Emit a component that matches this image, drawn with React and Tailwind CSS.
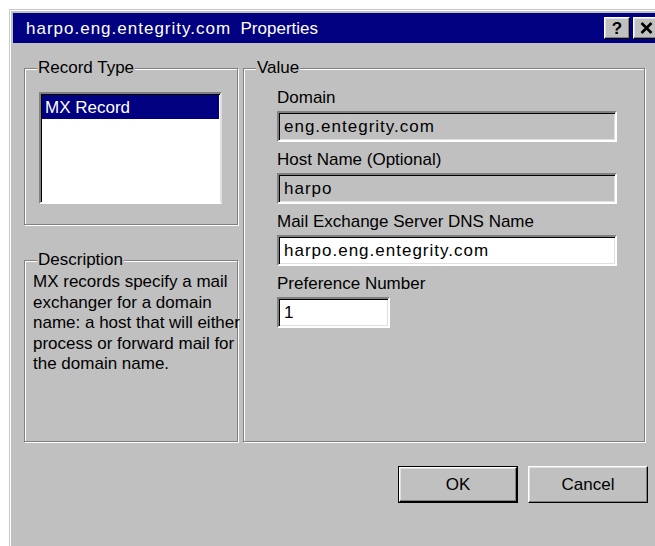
import React from 'react';

const font = { fontFamily: '"Liberation Sans", Arial, sans-serif' };

// etched group frame with its caption sitting on the top edge
const GroupBox = ({ title, className = '', children }) => (
  <div className={`relative border border-[#808080] shadow-[inset_1px_1px_0_#fff,1px_1px_0_#fff] ${className}`}>
    <span className="absolute -top-[11px] left-[12px] px-[1px] bg-[#c0c0c0] leading-[20px]">{title}</span>
    {children}
  </div>
);

const Field = ({ label, value, disabled, width = 'w-[340px]' }) => (
  <div className="flex flex-col">
    <span className="leading-[20px]">{label}</span>
    <div
      className={`mt-[3px] h-[31px] ${width} flex items-center px-[5px] border-2 border-t-[#808080] border-l-[#808080] border-b-white border-r-white shadow-[inset_1px_1px_0_#000,inset_-1px_-1px_0_#dfdfdf] ${disabled ? 'bg-[#c0c0c0]' : 'bg-white'}`}
    >
      <span className="tracking-[1px] leading-none">{value}</span>
    </div>
  </div>
);

const TitleButton = ({ children }) => (
  <div className="w-[26px] h-[22px] flex items-center justify-center bg-[#c0c0c0] border border-t-white border-l-white border-b-black border-r-black shadow-[inset_-1px_-1px_0_#808080,inset_1px_1px_0_#dfdfdf]">
    {children}
  </div>
);

export default function App() {
  return (
    <div className="w-[655px] h-[546px] overflow-hidden bg-white pt-[9px] pl-[9px] text-[17px] text-black" style={font}>
      <div className="w-[660px] h-[600px] bg-[#c0c0c0] border-l border-t border-[#c8c8c8] shadow-[inset_1px_1px_0_#fff] p-[3px]">
        {/* Title bar */}
        <div className="h-[30px] bg-[#000080] flex items-center pl-[13px] pr-[7px]">
          <span className="text-white whitespace-pre leading-none">
            <span className="tracking-[1px]">harpo.eng.entegrity.com</span>{'  Properties'}
          </span>
          <div className="ml-auto flex items-center gap-[3px]">
            <TitleButton>
              <span className="font-bold text-[17px] leading-none">?</span>
            </TitleButton>
            <TitleButton>
              <svg width="13" height="12" viewBox="0 0 13 12">
                <path d="M1.5 1 L11.5 11 M11.5 1 L1.5 11" stroke="#000" strokeWidth="2.6" />
              </svg>
            </TitleButton>
          </div>
        </div>

        {/* Groups */}
        <div className="mt-[25px] pl-[11px] flex gap-[5px]">
          <div className="w-[214px] flex flex-col">
            <GroupBox title="Record Type" className="h-[157px]">
              <div className="mt-[23px] ml-[14px] w-[183px] h-[112px] bg-white border-2 border-t-[#808080] border-l-[#808080] border-b-white border-r-[#dfdfdf] shadow-[inset_1px_1px_0_#000]">
                <div className="ml-[1px] mt-[1px] mr-[1px] h-[24px] bg-[#000080] text-white flex items-center pl-[3px] leading-none">
                  MX Record
                </div>
              </div>
            </GroupBox>
            <GroupBox title="Description" className="mt-[35px] h-[182px]">
              <div className="mt-[11px] pl-[8px] leading-[20.5px] whitespace-nowrap">
                <div>MX records specify a mail</div>
                <div>exchanger for a domain</div>
                <div>name: a host that will either</div>
                <div>process or forward mail for</div>
                <div>the domain name.</div>
              </div>
            </GroupBox>
          </div>

          <GroupBox title="Value" className="w-[402px] h-[374px]">
            <div className="pt-[19px] pl-[33px] flex flex-col gap-[8px]">
              <Field label="Domain" value="eng.entegrity.com" disabled />
              <Field label="Host Name (Optional)" value="harpo" disabled />
              <Field label="Mail Exchange Server DNS Name" value="harpo.eng.entegrity.com" />
              <Field label="Preference Number" value="1" width="w-[113px]" />
            </div>
          </GroupBox>
        </div>

        {/* Dialog buttons */}
        <div className="mt-[24px] ml-[385px] flex gap-[10px]">
          <div className="w-[120px] h-[37px] border border-black">
            <div className="h-full flex items-center justify-center border border-t-white border-l-white border-b-black border-r-black shadow-[inset_-1px_-1px_0_#808080,inset_1px_1px_0_#dfdfdf]">
              OK
            </div>
          </div>
          <div className="w-[120px] h-[37px] flex items-center justify-center border border-t-white border-l-white border-b-black border-r-black shadow-[inset_-1px_-1px_0_#808080,inset_1px_1px_0_#dfdfdf]">
            Cancel
          </div>
        </div>
      </div>
    </div>
  );
}
